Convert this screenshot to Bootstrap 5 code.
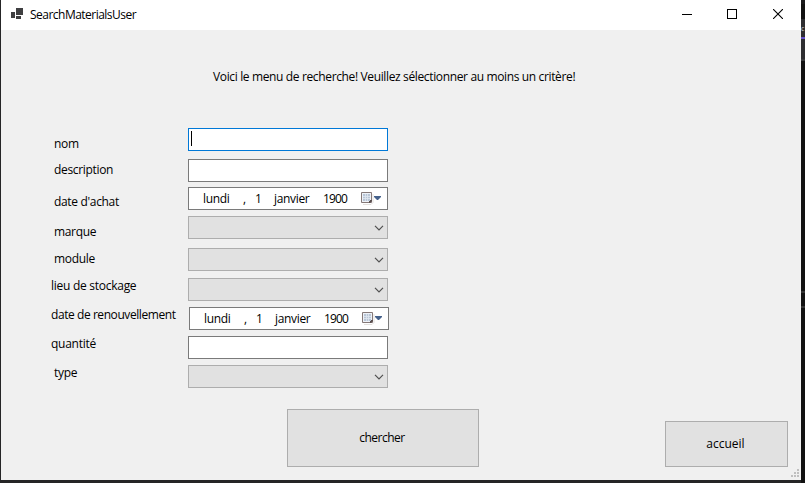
<!DOCTYPE html>
<html lang="fr">
<head>
<meta charset="utf-8">
<meta name="viewport" content="width=device-width, initial-scale=1">
<title>SearchMaterialsUser</title>
<link href="https://cdn.jsdelivr.net/npm/bootstrap@5.3.0/dist/css/bootstrap.min.css" rel="stylesheet">
<style>
body { width: 805px; height: 483px; background: linear-gradient(90deg, #252526 0 802px, #141415 802px); font: 12px/14px "Open Sans", "Noto Sans", sans-serif; letter-spacing: -.33px; color: #000; }
.desk-edge { width: 4px; height: 483px; background: linear-gradient(#1a1a1b 0 4px, #111 4px 19px, #2d2d30 19px 37px, #6350c8 37px 39px, #2d2d30 39px 59px, #3a3a3c 59px 61px, #111 61px 291px, #333 291px 293px, #111 293px 306px, #333 306px 308px, #111 308px); }
.desk-letter { color: #ccc; font-size: 7px; line-height: 14px; letter-spacing: 0; padding-top: 22px; }
.app-window { width: 800px; height: 480px; margin-left: 1px; background: #f0f0f0; }
.title-bar { height: 30px; }
.app-icon { margin: 0 6px 2px 9px; }
.title-text { letter-spacing: -.52px; }
.win-btn { width: 46px; height: 30px; padding-bottom: 2px; }
.win-btn.min { width: 44px; }
.intro { height: 98px; padding: 40px 0 0 212px; letter-spacing: -.36px; }
.fields { height: 281px; padding-left: 50px; }
.caption { width: 137px; padding-left: 3px; padding-top: 1px; }
.caption.out { padding-left: 0; letter-spacing: -.27px; }
.caption.long { letter-spacing: -.43px; }
.caption.d4 { padding-top: 4px; } .caption.d8 { padding-top: 8px; } .caption.d9 { padding-top: 9px; }
.g5 { margin-bottom: 5px; } .g6 { margin-bottom: 6px; } .g7 { margin-bottom: 7px; } .g8 { margin-bottom: 8px; } .g9 { margin-bottom: 9px; }
.entry { width: 200px; height: 23px; border: 1px solid #7a7a7a; background: #fff; }
.entry.active { border-color: #0078d7; padding: 2px; }
.caret { width: 1px; height: 15px; background: #000; }
.combo { background: #e1e1e1; border-color: #adadad; padding-right: 3px; }
.date-entry { padding-left: 14px; }
.shifted { margin-left: 1px; }
.w-day { width: 40px; } .w-comma { width: 12px; } .w-num { width: 19px; } .w-month { width: 49px; } .w-year { width: 38px; letter-spacing: -.85px; }
.btn.flat { --bs-btn-border-radius: 0; --bs-btn-padding-x: 0; --bs-btn-padding-y: 0; --bs-btn-bg: #e1e1e1; --bs-btn-border-color: #adadad; --bs-btn-color: #000; --bs-btn-font-size: 12px; --bs-btn-line-height: 14px; }
.actions { height: 71px; padding-left: 286px; }
.search-btn { width: 192px; height: 58px; letter-spacing: -.5px; padding-right: 2px; }
.home-btn { width: 123px; height: 46px; margin: 12px 0 0 186px; padding-right: 2px; }
.grip { margin: 60px 2px 0 auto; }
</style>
<script src="https://cdn.jsdelivr.net/npm/bootstrap@5.3.0/dist/js/bootstrap.bundle.min.js"></script>
</head>
<body class="overflow-hidden d-flex">
<svg width="0" height="0" class="position-absolute" aria-hidden="true">
  <symbol id="chev" viewBox="0 0 10 6"><path d="M1 .8 5 4.8 9 .8" fill="none" stroke="#505050" stroke-width="1.2"/></symbol>
  <symbol id="cal" viewBox="0 0 21 13">
    <path d="M2 12.5h8l2-2V2" fill="none" stroke="#e2dfdd"/>
    <path d="M.5.5h10v10H.5z" fill="#eef2f8" stroke="#857978"/>
    <path d="M8 11V8h3v1l-2 2z" fill="#5c5150"/>
    <path d="M2 2h7v7H2z" fill="#b9c6d6"/>
    <path d="M2 4.5h7M2 6.5h7M4.5 2v7M6.5 2v7" stroke="#dfe7f0" stroke-width=".8"/>
    <path d="M13 4h7v1l-3 3h-1l-3-3z" fill="#45618b"/>
  </symbol>
</svg>
<main class="app-window flex-shrink-0">
  <header class="title-bar bg-white d-flex align-items-center">
    <svg class="app-icon" width="14" height="14" viewBox="0 0 14 14" shape-rendering="crispEdges"><path d="M6 1h7v7H6zM1 5h4v6H1zM6 9h5v3H6z" fill="#3f3f41"/></svg>
    <span class="title-text me-auto text-nowrap">SearchMaterialsUser</span>
    <span class="win-btn min d-flex align-items-center justify-content-center"><svg width="10" height="10" shape-rendering="crispEdges"><path d="M0 5.5h10" stroke="#000"/></svg></span>
    <span class="win-btn d-flex align-items-center justify-content-center"><svg width="10" height="10" shape-rendering="crispEdges"><path d="M.5.5h9v9h-9z" fill="none" stroke="#000"/></svg></span>
    <span class="win-btn d-flex align-items-center justify-content-center"><svg width="10" height="10"><path d="m0 0 10 10M10 0 0 10" stroke="#000" stroke-width="1.1"/></svg></span>
  </header>
  <div class="intro text-nowrap">Voici le menu de recherche! Veuillez sélectionner au moins un critère!</div>
  <section class="fields">
    <div class="d-flex align-items-start g8"><span class="caption d9">nom</span><div class="entry active"><div class="caret"></div></div></div>
    <div class="d-flex align-items-start g5"><span class="caption d4">description</span><div class="entry"></div></div>
    <div class="d-flex align-items-start g6"><span class="caption d8">date d'achat</span><div class="entry date-entry d-flex align-items-center"><span class="w-day">lundi</span><span class="w-comma">,</span><span class="w-num">1</span><span class="w-month">janvier</span><span class="w-year">1900</span><svg width="21" height="13"><use href="#cal"/></svg></div></div>
    <div class="d-flex align-items-start g9"><span class="caption d9">marque</span><div class="entry combo d-flex align-items-center justify-content-end"><svg width="10" height="6"><use href="#chev"/></svg></div></div>
    <div class="d-flex align-items-start g7"><span class="caption d4">module</span><div class="entry combo d-flex align-items-center justify-content-end"><svg width="10" height="6"><use href="#chev"/></svg></div></div>
    <div class="d-flex align-items-start g6"><span class="caption out">lieu de stockage</span><div class="entry combo d-flex align-items-center justify-content-end"><svg width="10" height="6"><use href="#chev"/></svg></div></div>
    <div class="d-flex align-items-start g6"><span class="caption out long text-nowrap">date de renouvellement</span><div class="entry date-entry shifted d-flex align-items-center"><span class="w-day">lundi</span><span class="w-comma">,</span><span class="w-num">1</span><span class="w-month">janvier</span><span class="w-year">1900</span><svg width="21" height="13"><use href="#cal"/></svg></div></div>
    <div class="d-flex align-items-start g6"><span class="caption out">quantité</span><div class="entry"></div></div>
    <div class="d-flex align-items-start"><span class="caption">type</span><div class="entry combo d-flex align-items-center justify-content-end"><svg width="10" height="6"><use href="#chev"/></svg></div></div>
  </section>
  <footer class="actions d-flex align-items-start">
    <button type="button" class="btn flat search-btn">chercher</button>
    <button type="button" class="btn flat home-btn">accueil</button>
    <svg class="grip" width="8" height="8" shape-rendering="crispEdges"><path d="M6 0h2v2H6zM3 3h2v2H3zM6 3h2v2H6zM0 6h2v2H0zM3 6h2v2H3zM6 6h2v2H6z" fill="#bfbfbf"/></svg>
  </footer>
</main>
<aside class="desk-edge flex-shrink-0 overflow-hidden"><div class="desk-letter">c</div></aside>
</body>
</html>
